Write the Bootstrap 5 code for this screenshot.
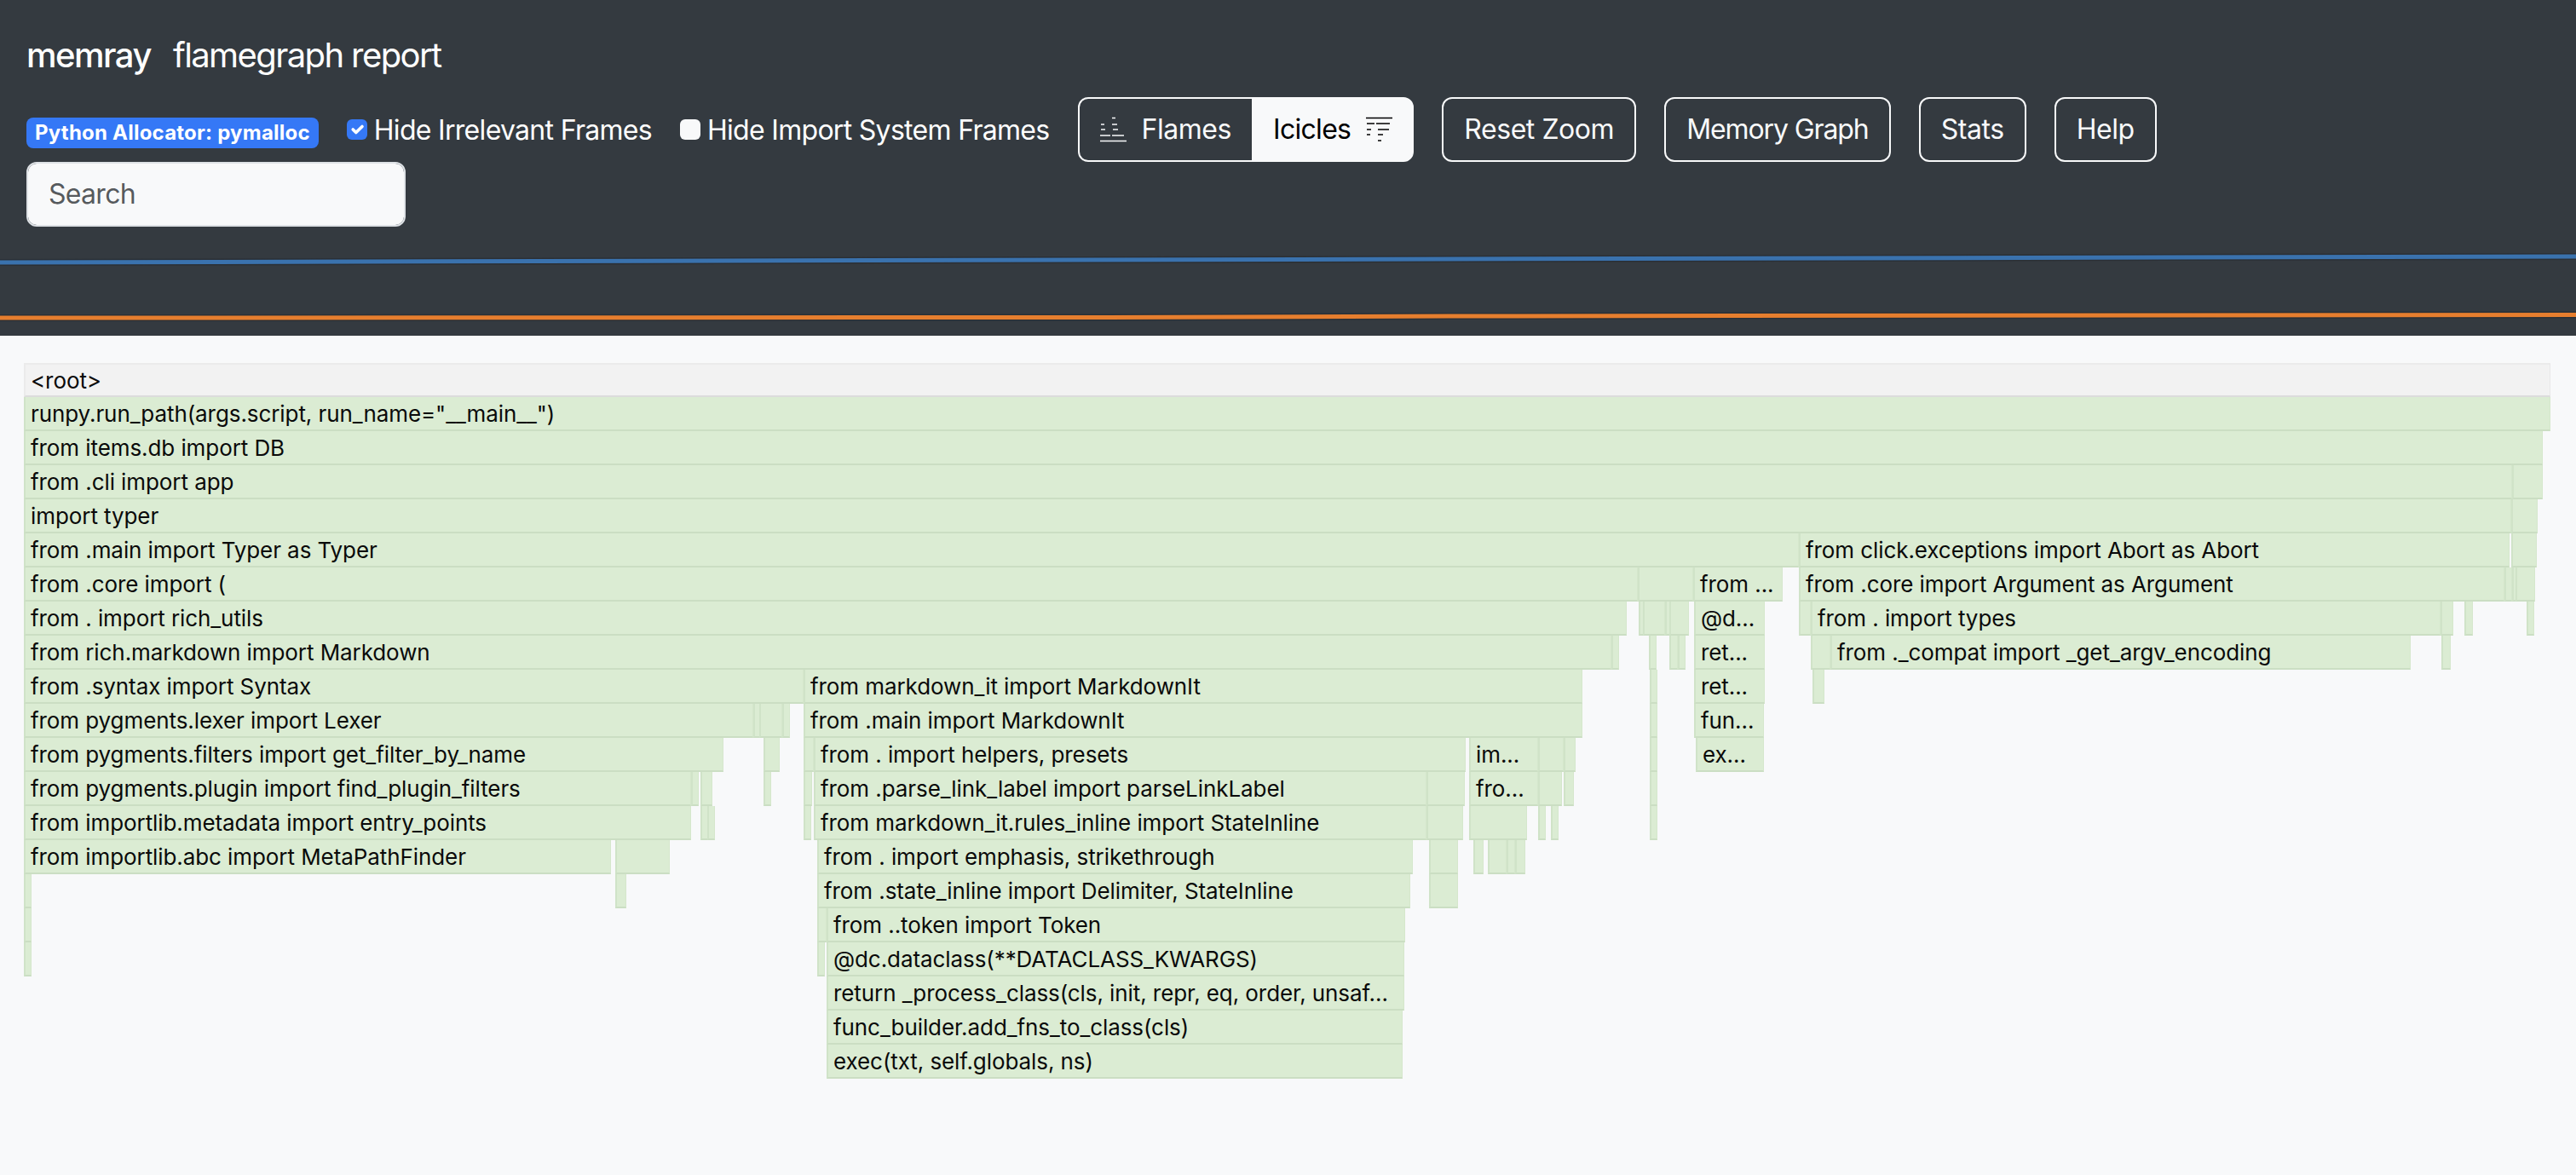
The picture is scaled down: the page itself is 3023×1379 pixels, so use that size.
<!DOCTYPE html>
<html lang="en">
<head>
    <meta charset="UTF-8">
    <meta name="viewport" content="width=device-width, initial-scale=1.0">
    <title>memray - flamegraph report</title>
    <link href="https://cdn.jsdelivr.net/npm/bootstrap@5.3.0/dist/css/bootstrap.min.css" rel="stylesheet">
    <style>
        /* the screenshot is a 2x retina capture, so everything rem based doubles */
        :root { --bs-border-width: 2px; --bs-body-bg: #f8f9fa; --bs-body-font-family: Inter, "Liberation Sans", sans-serif; }
        html { font-size: 32px; }
        body { background: #f8f9fa; min-height: 100vh; overflow: hidden; }
        .app-head { background: #343a40; height: 394px; }
        .brand-row { height: 114px; padding: 16px 0 0 31px; }
        .brand-row .navbar-brand { font-size: 40px; font-weight: 500; margin: 0 26px 0 0; padding: 0; color: #fff; letter-spacing: -1.5px; }
        .brand-row .navbar-text { font-size: 40px; padding: 0; color: #fff; letter-spacing: -1.6px; }
        .ctrl-row { padding-left: 31px; gap: 33px; height: 76px; }
        .alloc-tag { font-size: 24px; padding: 6px 10px; border-radius: 8px; background: #3578f6; margin-top: 8px; letter-spacing: .22px; line-height: 1; }
        .ctrl-check { display: flex; align-items: center; gap: 8px; padding: 0; margin: 0; min-height: 0; color: #fff; }
        .ctrl-check .form-check-input { float: none; margin: 0; width: 24px; height: 24px; border: 0; border-radius: 6px; }
        .ctrl-check .form-check-input:checked { background-color: #3578f6; }
        .ctrl-check label { letter-spacing: -.7px; padding-top: 2px; }
        .ctrl-row .btn { letter-spacing: -.45px; }
        .ctrl-row .btn-group .btn { display: flex; align-items: center; gap: 18px; }
        .ctrl-row .btn-group .btn.mode-ice { padding-left: 23px; padding-right: 23px; letter-spacing: -.7px; }
        .ctrl-row .btn.btn-tight { letter-spacing: -1.1px; }
        .flame-ico { width: 31px; height: 30px; flex: none; }
        .search-row { padding-left: 31px; }
        .search-box { width: 445px; letter-spacing: -.7px; }
        .mem-chart { display: block; width: 100%; height: 128px; }
        .flame-area { position: relative; height: 840px; margin-top: 32px; }
        .frame { position: absolute; height: 40px; background: #dbecd3; border-bottom: 2px solid #cbdec3; border-left: 2px solid #d0e3c8; border-right: 1px solid #d5e7cc; font-size: 26px; line-height: 39px; padding-left: 6px; color: #0a0a0a; white-space: nowrap; overflow: hidden; letter-spacing: -.08px; }
        .frame.root-frame { background: #f2f2f2; border-top: 2px solid #ebebeb; border-bottom-color: #dcdcdc; border-left-color: #ebebeb; border-right-color: #e8e8e8; line-height: 37px; }
    </style>
</head>
<body>
    <header class="app-head">
        <nav class="navbar navbar-dark brand-row justify-content-start">
            <span class="navbar-brand">memray</span>
            <span class="navbar-text">flamegraph report</span>
        </nav>

        <div class="d-flex align-items-center ctrl-row">
            <span class="badge alloc-tag">Python Allocator: pymalloc</span>
            <div class="form-check ctrl-check">
                <input class="form-check-input" type="checkbox" id="hideIrrelevant" checked>
                <label for="hideIrrelevant">Hide Irrelevant Frames</label>
            </div>
            <div class="form-check ctrl-check">
                <input class="form-check-input" type="checkbox" id="hideImports">
                <label for="hideImports">Hide Import System Frames</label>
            </div>
            <div class="btn-group" role="group">
                <input type="radio" class="btn-check" name="flameMode" id="modeFlames" autocomplete="off">
                <label class="btn btn-outline-light" for="modeFlames">
                    <svg class="flame-ico" viewBox="0 0 31 30" stroke="currentColor" stroke-width="1.6" fill="none" aria-hidden="true">
                        <path d="M14 1.5h4M1 9h4M14 9h6M1 15h5M15 15h6M0 22h12M14 22h14M0 28.500h31"/>
                    </svg>
                    Flames
                </label>
                <input type="radio" class="btn-check" name="flameMode" id="modeIcicles" autocomplete="off" checked>
                <label class="btn btn-outline-light mode-ice" for="modeIcicles">
                    Icicles
                    <svg class="flame-ico" viewBox="0 0 31 30" stroke="currentColor" stroke-width="1.6" fill="none" aria-hidden="true">
                        <path d="M0 1.500h31M1 8h9M12 8h16M1 15h5M14 15h13M1 21h4M14 21h6M14 28h4"/>
                    </svg>
                </label>
            </div>
            <button class="btn btn-outline-light" type="button">Reset Zoom</button>
            <button class="btn btn-outline-light btn-tight" type="button">Memory Graph</button>
            <button class="btn btn-outline-light" type="button">Stats</button>
            <button class="btn btn-outline-light" type="button">Help</button>
        </div>

        <div class="search-row">
            <input class="form-control search-box" type="text" placeholder="Search">
        </div>

        <svg class="mem-chart" viewBox="0 0 3023 128" preserveAspectRatio="none" fill="none" aria-hidden="true">
            <polyline points="0,42 1700,38 3023,35" stroke="#2b3036" stroke-width="8"/>
            <polyline points="0,42 1700,38 3023,35" stroke="#3a72ae" stroke-width="5"/>
            <polyline points="0,107 1300,106.500 1700,105 3023,103.500" stroke="#2b3036" stroke-width="8"/>
            <polyline points="0,107 1300,106.500 1700,105 3023,103.500" stroke="#e67e2e" stroke-width="5"/>
        </svg>
    </header>

    <div class="flame-area" id="flame"></div>

    <script>
        // one entry per row of the graph: [left, right, label], page pixels
        const rows = [
            [[28, 2993, '<root>']],
            [[28, 2993, 'runpy.run_path(args.script, run_name="__main__")']],
            [[28, 2984, 'from items.db import DB']],
            [[28, 2948, 'from .cli import app'], [2948, 2984]],
            [[28, 2947, 'import typer'], [2947, 2978]],
            [[28, 2111, 'from .main import Typer as Typer'], [2111, 2945, 'from click.exceptions import Abort as Abort'], [2947, 2977]],
            [[28, 1922, 'from .core import ('], [1922, 1987], [1987, 2092, 'from ...'], [2111, 2939, 'from .core import Argument as Argument'], [2939, 2944], [2948, 2952], [2952, 2975]],
            [[28, 1909, 'from . import rich_utils'], [1923, 1928], [1928, 1954], [1954, 1959], [1959, 1982], [1988, 2071, '@d...'], [2111, 2125], [2125, 2864, 'from . import types'], [2864, 2879], [2892, 2902], [2965, 2974]],
            [[28, 1891, 'from rich.markdown import Markdown'], [1891, 1897], [1935, 1943], [1959, 1969], [1969, 1977], [1988, 2071, 'ret...'], [2125, 2148], [2148, 2829, 'from ._compat import _get_argv_encoding'], [2865, 2876]],
            [[28, 943, 'from .syntax import Syntax'], [943, 1857, 'from markdown_it import MarkdownIt'], [1936, 1942], [1988, 2071, 'ret...'], [2127, 2141]],
            [[28, 884, 'from pygments.lexer import Lexer'], [884, 891], [891, 918], [918, 926], [943, 1857, 'from .main import MarkdownIt'], [1936, 1942], [1988, 2070, 'fun...']],
            [[28, 849, 'from pygments.filters import get_filter_by_name'], [896, 915], [943, 955], [955, 1720, 'from . import helpers, presets'], [1724, 1805, 'im...'], [1805, 1835], [1835, 1849], [1936, 1942], [1990, 2070, 'ex...']],
            [[28, 811, 'from pygments.plugin import find_plugin_filters'], [811, 818], [822, 836], [896, 904], [943, 953], [955, 1674, 'from .parse_link_label import parseLinkLabel'], [1674, 1719], [1724, 1805, 'fro...'], [1805, 1833], [1835, 1847], [1936, 1942]],
            [[28, 811, 'from importlib.metadata import entry_points'], [822, 830], [830, 834], [943, 949], [955, 1674, 'from markdown_it.rules_inline import StateInline'], [1674, 1717], [1724, 1792], [1805, 1811], [1820, 1828], [1936, 1942]],
            [[28, 717, 'from importlib.abc import MetaPathFinder'], [722, 786], [959, 1658, 'from . import emphasis, strikethrough'], [1677, 1711], [1729, 1741], [1746, 1768], [1768, 1778], [1778, 1790]],
            [[28, 35], [722, 735], [959, 1655, 'from .state_inline import Delimiter, StateInline'], [1677, 1711]],
            [[28, 35], [959, 970], [970, 1649, 'from ..token import Token']],
            [[28, 34], [959, 964], [970, 1648, '@dc.dataclass(**DATACLASS_KWARGS)']],
            [[970, 1648, 'return _process_class(cls, init, repr, eq, order, unsaf...']],
            [[970, 1646, 'func_builder.add_fns_to_class(cls)']],
            [[970, 1646, 'exec(txt, self.globals, ns)']]
        ];

        const flame = document.getElementById('flame');
        rows.forEach((row, r) => {
            row.forEach(([left, right, label]) => {
                const el = document.createElement('div');
                el.className = r === 0 ? 'frame root-frame' : 'frame';
                el.style.top = `${r * 40}px`;
                el.style.left = `${left}px`;
                el.style.width = `${right - left}px`;
                if (label) el.textContent = label;
                flame.appendChild(el);
            });
        });
    </script>
    <script src="https://cdn.jsdelivr.net/npm/bootstrap@5.3.0/dist/js/bootstrap.bundle.min.js"></script>
</body>
</html>
